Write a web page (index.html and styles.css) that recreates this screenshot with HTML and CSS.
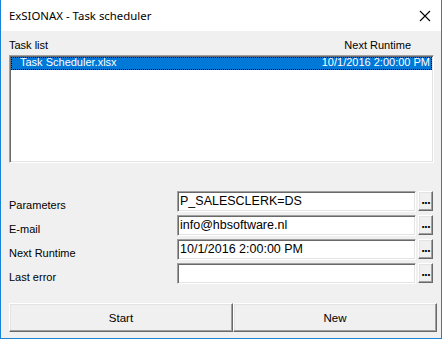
FILE: index.html
```html
<!DOCTYPE html>
<html lang="en">
<head>
    <meta charset="UTF-8">
    <title>ExSIONAX - Task scheduler</title>
    <link rel="stylesheet" href="styles.css">
</head>
<body>
    <div class="window">
        <div class="titlebar">
            <span class="title">ExSIONAX - Task scheduler</span>
            <svg class="close" width="12" height="12" viewBox="0 0 12 12">
                <path d="M1 1 L11 11 M11 1 L1 11" stroke="#000" stroke-width="1.1" fill="none"/>
            </svg>
        </div>

        <div class="content">
            <div class="list-header">
                <span>Task list</span>
                <span class="runtime-head">Next Runtime</span>
            </div>

            <div class="listbox">
                <div class="task-row selected">
                    <span class="task-name">Task Scheduler.xlsx</span>
                    <span class="task-date">10/1/2016 2:00:00 PM</span>
                </div>
            </div>

            <div class="form">
                <div class="form-row">
                    <label>Parameters</label>
                    <div class="field">P_SALESCLERK=DS</div>
                    <button class="dots">...</button>
                </div>
                <div class="form-row">
                    <label>E-mail</label>
                    <div class="field">info@hbsoftware.nl</div>
                    <button class="dots">...</button>
                </div>
                <div class="form-row">
                    <label>Next Runtime</label>
                    <div class="field">10/1/2016 2:00:00 PM</div>
                    <button class="dots">...</button>
                </div>
                <div class="form-row">
                    <label>Last error</label>
                    <div class="field"></div>
                    <button class="dots">...</button>
                </div>
            </div>

            <div class="actions">
                <button class="btn start">Start</button>
                <button class="btn new">New</button>
            </div>
        </div>
    </div>
</body>
</html>
```

FILE: styles.css
```css
body {
    margin: 0;
    font-family: 'Liberation Sans', Arial, sans-serif;
    font-size: 11px;
    color: #000;
}

.window {
    width: 442px;
    height: 339px;
    box-sizing: border-box;
    border: 1px solid #1883d7;
    border-top: none;
    background-color: #f0f0f0;
}

.titlebar {
    height: 31px;
    background-color: #fff;
    display: flex;
    align-items: center;
    justify-content: space-between;
    padding: 0 8px 0 8px;
}

.title {
    font-family: 'Noto Sans', sans-serif;
    font-size: 11.4px;
    padding-bottom: 1px;
}

.close {
    display: block;
    margin-right: 2px;
}

.content {
    padding: 0 7px 0 8px;
}

.list-header {
    display: flex;
    justify-content: space-between;
    line-height: 14px;
    margin-top: 7px;
}

.runtime-head {
    padding-right: 23px;
}

.listbox {
    margin-top: 3px;
    height: 108px;
    box-sizing: border-box;
    background-color: #fff;
    border: 1px solid;
    border-color: #a0a0a0 #fff #fff #a0a0a0;
    box-shadow: inset 1px 1px #696969, inset -1px -1px #e3e3e3;
    padding: 1px 1px;
}

.task-row {
    display: flex;
    justify-content: space-between;
    height: 13px;
    line-height: 11px;
    box-sizing: border-box;
    padding: 0 2px 0 9px;
}

.task-row.selected {
    background-color: #0078d7;
    color: #fff;
    outline: 1px dotted #000;
    outline-offset: -1px;
}

.form {
    margin-top: 28px;
    display: flex;
    flex-direction: column;
    gap: 3px;
}

.form-row {
    display: flex;
    align-items: flex-end;
    height: 21px;
}

.form-row label {
    width: 168px;
    line-height: 13px;
}

.field {
    width: 239px;
    height: 21px;
    box-sizing: border-box;
    background-color: #fff;
    border: 1px solid;
    border-color: #a0a0a0 #fff #fff #a0a0a0;
    box-shadow: inset 1px 1px #696969, inset -1px -1px #e3e3e3;
    padding: 0 2px;
    line-height: 19px;
    font-size: 12.5px;
}

.dots {
    margin-left: 2px;
    width: 15px;
    height: 20px;
    align-self: flex-start;
    padding: 0 0 1px 0;
    font-family: 'DejaVu Sans', sans-serif;
    font-size: 10px;
    font-weight: bold;
    line-height: 10px;
    letter-spacing: -1px;
    background-color: #f0f0f0;
    border: 1px solid;
    border-color: #fff #696969 #696969 #fff;
    box-shadow: inset -1px -1px #a0a0a0, inset 1px 1px #e3e3e3;
}

.actions {
    margin-top: 19px;
    display: flex;
    width: 428px;
}

.btn {
    height: 29px;
    padding: 0;
    font-family: 'Liberation Sans', Arial, sans-serif;
    font-size: 11.5px;
    background-color: #f0f0f0;
    border: 1px solid;
    border-color: #fff #696969 #696969 #fff;
    box-shadow: inset -1px -1px #a0a0a0, inset 1px 1px #e3e3e3;
}

.start {
    width: 224px;
}

.new {
    width: 204px;
}
```
